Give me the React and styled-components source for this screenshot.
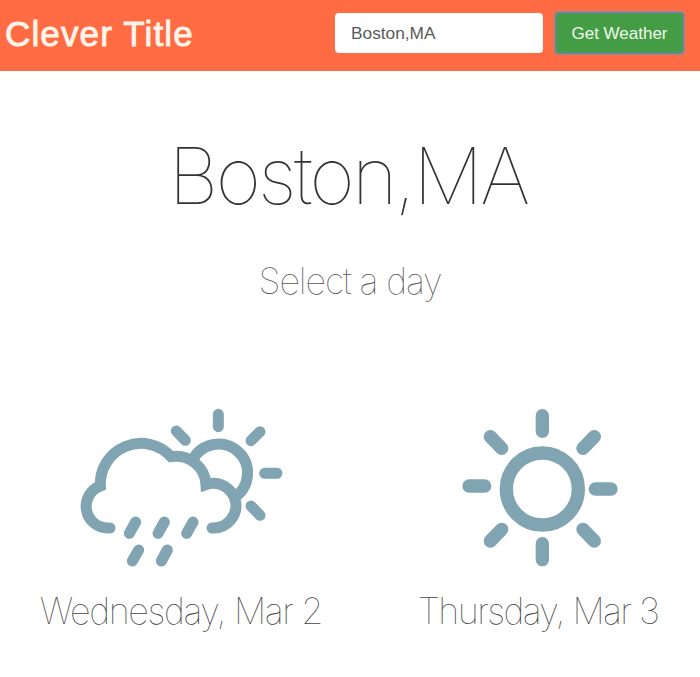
import React from "react";
import styled, { createGlobalStyle } from "styled-components";

const GlobalStyle = createGlobalStyle`
  * { box-sizing: border-box; }
  body { margin: 0; background: #fff; font-family: "Liberation Sans", Helvetica, Arial, sans-serif; }
`;

const Page = styled.div`
  width: 700px;
  height: 677px;
  overflow: hidden;
  background: #fff;
`;

const Header = styled.header`
  display: flex;
  align-items: center;
  height: 71px;
  padding: 0 16px 5px 5px;
  background: #ff6c43;
`;

const Title = styled.h1`
  flex: 1;
  margin: 0;
  padding-top: 1px;
  color: #fff4ea;
  font-size: 35px;
  font-weight: 400;
  line-height: 40px;
  letter-spacing: 1.15px;
  -webkit-text-stroke: 0.9px #fff4ea;
`;

const SearchForm = styled.form`
  display: flex;
  align-items: center;
  gap: 12px;
`;

const CityInput = styled.input`
  width: 208px;
  height: 40px;
  padding: 0 15px 0 16px;
  border: 0;
  border-radius: 4px;
  background: #fff;
  color: #5a5a5a;
  font: 17.3px "Liberation Sans", Arial, sans-serif;
`;

const SubmitButton = styled.button`
  width: 129px;
  height: 42px;
  padding: 1px 0 0;
  border: 2px solid #5d8c86;
  border-radius: 4px;
  background: #449d44;
  box-shadow: 0 0 2px 1px #a48795;
  color: #f0faea;
  font: 17px "Liberation Sans", Arial, sans-serif;
`;

const Forecast = styled.main`
  display: flex;
  flex-direction: column;
  align-items: center;
`;

const thin = `
  margin: 0;
  font-family: Inter, "Liberation Sans", sans-serif;
  font-weight: 100;
  white-space: nowrap;
`;

const City = styled.h2`
  ${thin}
  margin-top: 56px;
  padding-right: 4px;
  color: #333;
  font-size: 78px;
  line-height: 98px;
  letter-spacing: -2.7px;
`;

const Prompt = styled.p`
  ${thin}
  margin-top: 32px;
  color: #555;
  font-size: 36px;
  line-height: 48px;
  letter-spacing: -1.15px;
`;

const Days = styled.div`
  display: grid;
  grid-template-columns: 360px 358px;
  align-self: flex-start;
  margin: 95px 0 0 1px;
`;

const Day = styled.section`
  display: flex;
  flex-direction: column;
  align-items: center;
`;

const DayLabel = styled.h3`
  ${thin}
  margin-top: 7px;
  padding-right: ${(p) => p.$inset};
  color: #444;
  font-size: 36px;
  line-height: 48px;
  letter-spacing: ${(p) => p.$spacing};
`;

const Icon = styled.svg`
  display: block;
  fill: none;
  stroke: #81a4b3;
  stroke-linecap: round;
`;

const RainIcon = () => (
  <Icon width="220" height="180" viewBox="3 0 660 540" strokeWidth="33">
    <path d="M367 182A87 87 0 1 1 490 294" strokeLinecap="butt" />
    <path d="M120 384H113A65 65 0 0 1 91 258A122 122 0 0 1 303 170A90 90 0 0 1 408 254A67 67 0 1 1 430 384H426" />
    <path d="M445 43V80M570 95L543 122M584 220H621M543 318L570 346M319 93L346 121" />
    <path d="M197 366L178 400M283 366L264 400M369 366L350 400M206 450L187 483M292 450L274 483" />
  </Icon>
);

const SunIcon = () => (
  <Icon width="180" height="180" viewBox="0 0 540 540" strokeWidth="40">
    <circle cx="277" cy="267" r="108" />
    <path d="M277 47V94M277 431V479M57 258H104M436 267H483M121 110L155 145M433 110L399 145M155 388L121 423M399 388L433 423" />
  </Icon>
);

export default function App() {
  return (
    <>
      <GlobalStyle />
      <Page>
        <Header>
          <Title>Clever Title</Title>
          <SearchForm onSubmit={(e) => e.preventDefault()}>
            <CityInput defaultValue="Boston,MA" aria-label="City" />
            <SubmitButton>Get Weather</SubmitButton>
          </SearchForm>
        </Header>
        <Forecast>
          <City>Boston,MA</City>
          <Prompt>Select a day</Prompt>
          <Days>
            <Day>
              <RainIcon />
              <DayLabel $spacing="-1.4px" $inset="0">Wednesday, Mar 2</DayLabel>
            </Day>
            <Day>
              <SunIcon />
              <DayLabel $spacing="-1.6px" $inset="4px">Thursday, Mar 3</DayLabel>
            </Day>
          </Days>
        </Forecast>
      </Page>
    </>
  );
}
